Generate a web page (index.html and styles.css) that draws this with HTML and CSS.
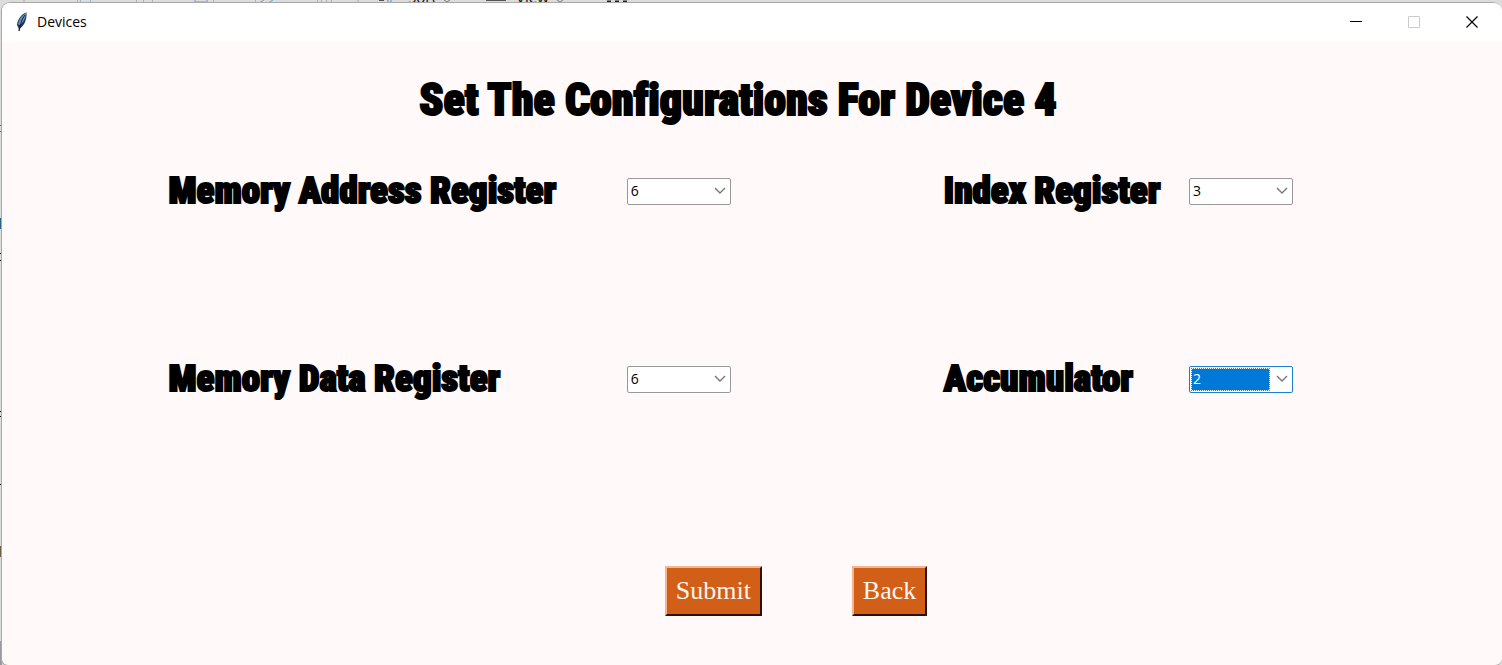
FILE: index.html
```html
<!DOCTYPE html>
<html lang="en">
<head>
<meta charset="utf-8">
<title>Devices</title>
<link rel="stylesheet" href="styles.css">
</head>
<body>
<div class="backdrop" aria-hidden="true">
  <svg class="marks" width="640" height="665" viewBox="0 0 640 665">
    <path d="M24 0v3M358 0v3" stroke="#b8a0a0"/>
    <path d="M77.500 0v3M80.500 0v3M90.500 0v3M136.500 0v3M143.500 0v3M152.500 0v3M213.500 0v3M255.500 0v3M317.500 0v3M321.500 0v3M326.500 0v3M331.500 0v3" stroke="#9fb4c4"/>
    <path d="M195 0v2h12V0M259 3l5-3M268 3l5-3" stroke="#6f9fc8" fill="none"/>
    <path d="M379 .5h5" stroke="#555"/><path d="M388 0v3M391 0v3" stroke="#4f93c0"/>
    <path d="M444 0l3 2l3-2M557 0l3 2l3-2" stroke="#777" fill="none"/>
    <path d="M486 .5h20" stroke="#555"/>
    <path d="M607 1.500h4M615 1.500h4M623 1.500h4" stroke="#222" stroke-width="2"/>
    <path d="M0 125.500h2M0 131.500h2" stroke="#765"/>
    <path d="M0 218h2v11H0z" fill="#28618c"/>
    <path d="M0 253.500h2M0 260.500h2M0 411.500h2M0 416.500h2M0 484.500h2M0 653.500h2" stroke="#111"/>
    <path d="M0 546h2v11H0z" fill="#6b6045"/>
    <path d="M0 641h2v24H0z" fill="#9a9a9e"/>
  </svg>
  <span class="peek peek-sort">Sort</span>
  <span class="peek peek-view">View</span>
</div>
<div class="window">
  <header class="titlebar">
    <svg class="feather" width="12" height="20" viewBox="0 0 12 20">
      <path d="M10.500.5C6 1.500 1.500 7 1 13l1.500 3L3 19.500l1.500-3.500C8 13.500 11 8 10.500.5z" fill="#23344a"/>
      <path d="M10 1C6 3 2.500 7.500 2 12.500l2 .5C7.500 10 10 6 10 1z" fill="#5f8fc4"/>
      <path d="M9 3C6 7 4.500 11 3 19" stroke="#14202f" fill="none"/>
    </svg>
    <span class="caption">Devices</span>
    <div class="controls">
      <button class="control" type="button" aria-label="Minimize"><svg width="12" height="12" viewBox="0 0 12 12"><path d="M0 5.500h12" stroke="#000"/></svg></button>
      <button class="control" type="button" aria-label="Maximize" disabled><svg width="12" height="12" viewBox="0 0 12 12"><path d="M.5.5h11v11H.5z" stroke="#ccc" fill="none"/></svg></button>
      <button class="control" type="button" aria-label="Close"><svg width="12" height="12" viewBox="0 0 12 12"><path d="M.5.5l11 11M11.500.5l-11 11" stroke="#000" stroke-width="1.200"/></svg></button>
    </div>
  </header>
  <form class="content">
    <h1 class="heading">Set The Configurations For Device 4</h1>
    <div class="fields">
      <label class="label" for="mar">Memory Address Register</label>
      <div class="combo"><select class="value" id="mar"><option>6</option></select><svg class="chevron" width="12" height="8" viewBox="0 0 12 8"><path d="M1 1l5 5l5-5"/></svg></div>
      <label class="label" for="index">Index Register</label>
      <div class="combo"><select class="value" id="index"><option>3</option></select><svg class="chevron" width="12" height="8" viewBox="0 0 12 8"><path d="M1 1l5 5l5-5"/></svg></div>
      <label class="label" for="mdr">Memory Data Register</label>
      <div class="combo"><select class="value" id="mdr"><option>6</option></select><svg class="chevron" width="12" height="8" viewBox="0 0 12 8"><path d="M1 1l5 5l5-5"/></svg></div>
      <label class="label" for="acc">Accumulator</label>
      <div class="combo combo-active"><select class="value" id="acc"><option>2</option></select><svg class="chevron" width="12" height="8" viewBox="0 0 12 8"><path d="M1 1l5 5l5-5"/></svg></div>
    </div>
    <div class="actions">
      <button class="action" type="button">Submit</button>
      <button class="action" type="button">Back</button>
    </div>
  </form>
</div>
</body>
</html>
```
FILE: styles.css
```css
* { box-sizing: border-box; }
body {
  margin: 0;
  min-height: 100vh;
  display: flex;
  padding: 2px 0 0 1px;
  background: #dcdcdc;
  font-family: "Open Sans", "Noto Sans", sans-serif;
}
.backdrop {
  position: absolute;
  inset: 0;
  overflow: hidden;
}
.marks { display: block; }
.peek {
  position: absolute;
  top: -13px;
  font-size: 15px;
  line-height: 20px;
  color: #111;
}
.peek-sort { left: 408px; }
.peek-view { left: 516px; }
.window {
  position: relative;
  flex: 1;
  display: flex;
  flex-direction: column;
  border: 1px solid #a9a9a9;
  border-right: 0;
  border-radius: 9px 9px 7px 7px;
  overflow: hidden;
  background: #fff9f9;
}
.titlebar {
  display: flex;
  align-items: center;
  height: 38px;
  padding: 0 1px 0 14px;
  background: #fff;
}
.caption {
  margin-left: 9px;
  font-size: 14px;
  line-height: 20px;
}
.controls {
  display: flex;
  margin-left: auto;
}
.control {
  display: flex;
  align-items: center;
  justify-content: center;
  width: 58px;
  height: 38px;
  padding: 0;
  border: 0;
  background: none;
}
.heading, .label {
  font-family: Impact, "Roboto Condensed", Roboto, sans-serif;
  font-weight: 900;
  font-variant-ligatures: none;
  color: #000;
  -webkit-text-stroke: 2px #000;
}
.heading {
  margin: 0;
  padding: 34px 28px 0 0;
  font-size: 44px;
  line-height: 50px;
  text-align: center;
}
.fields {
  display: grid;
  grid-template-columns: 458fr 317fr 245fr 313fr;
  grid-template-rows: 50px 50px;
  row-gap: 138px;
  align-items: center;
  padding: 41px 0 0 11.1%;
}
.label {
  font-size: 37px;
  line-height: 50px;
  white-space: nowrap;
}
.combo {
  display: flex;
  align-items: center;
  width: 104px;
  height: 27px;
  padding: 1px;
  border: 1px solid #999;
  border-radius: 2px;
  background: #fff;
}
.value {
  appearance: none;
  width: 79px;
  height: 23px;
  padding: 0 1px;
  border: 1px solid transparent;
  border-radius: 0;
  background: none;
  font: 14px/20px "Open Sans", sans-serif;
  color: #000;
}
.chevron {
  margin-left: 6px;
  fill: none;
  stroke: #777;
  stroke-width: 1.400;
}
.combo-active { border-color: #1a7fd4; }
.combo-active .value {
  border: 1px dotted #8b6b45;
  background: #0078d7 padding-box;
  color: #fff;
}
.actions {
  display: flex;
  justify-content: center;
  gap: 90px;
  padding: 162px 0 49px 88px;
}
.action {
  height: 50px;
  padding: 0 9px 1px;
  border: 2px solid;
  border-color: #f6b58c #2b1204 #2b1204 #f6b58c;
  background: #d25f17;
  color: #fff5ee;
  font: 26px/30px "Liberation Serif", serif;
}
```
